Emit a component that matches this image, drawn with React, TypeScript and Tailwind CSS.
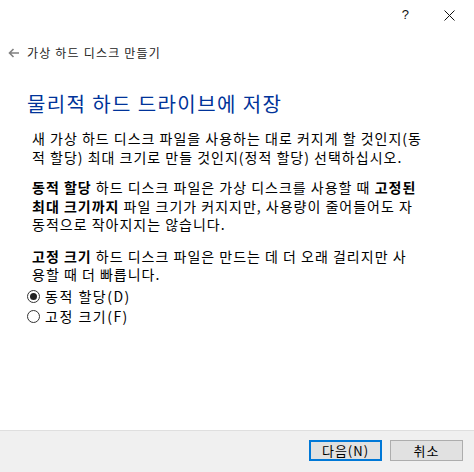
import type { ReactNode } from "react";

const font = "font-['Noto_Sans_CJK_KR','Noto_Sans',sans-serif]";

function Line({ children }: { children: ReactNode }) {
  return <span className="block whitespace-nowrap">{children}</span>;
}

function Radio({ checked, label }: { checked?: boolean; label: string }) {
  return (
    <label className="flex h-[20px] items-center gap-[5px]">
      <span className="flex h-[13px] w-[13px] items-center justify-center rounded-full border border-[#333] bg-white">
        {checked ? <span className="h-[7px] w-[7px] rounded-full bg-[#222]" /> : null}
      </span>
      <span className="tracking-[1.5px]">{label}</span>
    </label>
  );
}

function Button({ label, focused }: { label: string; focused?: boolean }) {
  return (
    <button
      className={`flex h-[21px] w-[73px] items-center justify-center bg-[#e1e1e1] text-[13px] leading-none tracking-[1px] text-black ${
        focused ? "border-2 border-[#0078d7]" : "border border-[#adadad]"
      }`}
    >
      {label}
    </button>
  );
}

export default function App() {
  return (
    <div className={`flex h-[472px] w-[474px] flex-col bg-white text-black ${font}`}>
      <div className="flex h-[30px] items-center justify-end pr-[19px]">
        <span className="mr-[35px] font-['Liberation_Sans',sans-serif] text-[13px] text-[#111]">?</span>
        <svg width="11" height="11" viewBox="0 0 11 11" className="text-[#111]">
          <path d="M0.5 0.5 L10.5 10.5 M10.5 0.5 L0.5 10.5" stroke="currentColor" strokeWidth="1" />
        </svg>
      </div>

      <div className="mt-[13px] flex h-[20px] items-center pl-[8px]">
        <svg width="12" height="10" viewBox="0 0 12 10" className="text-[#808080]">
          <path d="M11 5 H2 M5.5 1 L1.5 5 L5.5 9" fill="none" stroke="currentColor" strokeWidth="1.6" />
        </svg>
        <span className="ml-[7px] text-[12px] tracking-[1.2px] text-[#222]">가상 하드 디스크 만들기</span>
      </div>

      <div className="flex-1 pl-[27px]">
        <h1 className="mt-[27px] text-[20px] leading-[28px] tracking-[1.4px] text-[#003399]">
          물리적 하드 드라이브에 저장
        </h1>

        <div className="pl-[5px] text-[14px] leading-[18.5px] tracking-[1px]">
          <p className="mt-[11px]">
            <Line>새 가상 하드 디스크 파일을 사용하는 대로 커지게 할 것인지(동</Line>
            <Line>적 할당) 최대 크기로 만들 것인지(정적 할당) 선택하십시오.</Line>
          </p>
          <p className="mt-[12px]">
            <Line>
              <b>동적 할당</b> 하드 디스크 파일은 가상 디스크를 사용할 때 <b>고정된</b>
            </Line>
            <Line>
              <b>최대 크기까지</b> 파일 크기가 커지지만, 사용량이 줄어들어도 자
            </Line>
            <Line>동적으로 작아지지는 않습니다.</Line>
          </p>
          <p className="mt-[13px]">
            <Line>
              <b>고정 크기</b> 하드 디스크 파일은 만드는 데 더 오래 걸리지만 사
            </Line>
            <Line>용할 때 더 빠릅니다.</Line>
          </p>
        </div>

        <div className="mt-[3px] text-[14px]">
          <Radio checked label="동적 할당(D)" />
          <Radio label="고정 크기(F)" />
        </div>
      </div>

      <div className="flex h-[42px] items-start justify-end gap-[8px] border-t border-[#dfdfdf] bg-[#f0f0f0] pr-[11px] pt-[9px]">
        <Button label="다음(N)" focused />
        <Button label="취소" />
      </div>
    </div>
  );
}
